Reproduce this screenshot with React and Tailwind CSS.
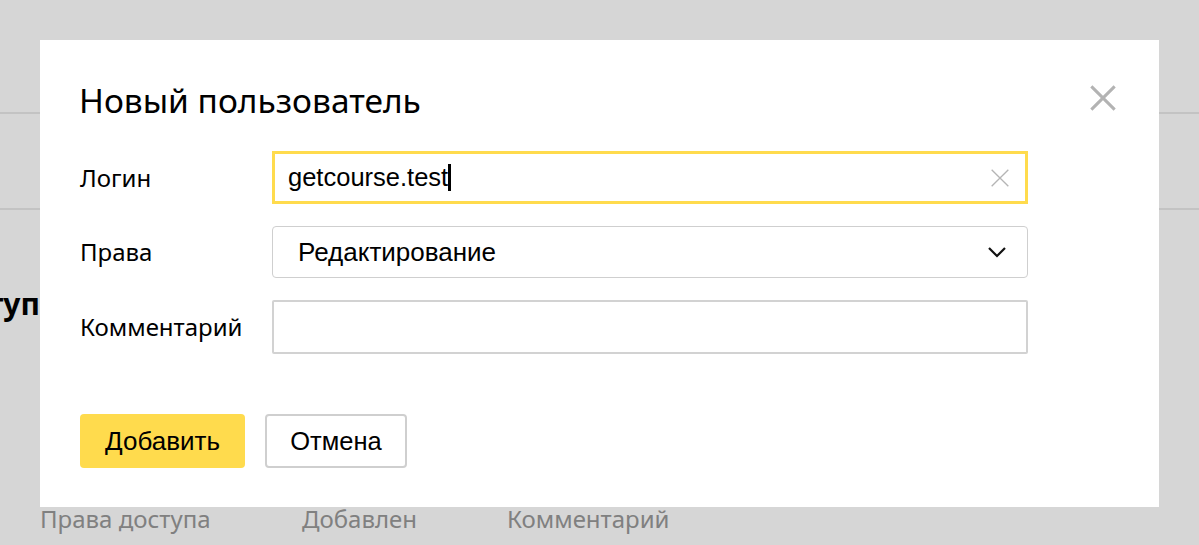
const Cross = ({ size, stroke, color }) => (
  <svg width={size} height={size} viewBox="0 0 24 24" fill="none">
    <path d="M2 2L22 22M22 2L2 22" stroke={color} strokeWidth={stroke} />
  </svg>
);

const Field = ({ label, children }) => (
  <div className="flex items-center">
    <div className="w-[192px] text-[24px] text-black" style={{ fontFamily: '"Noto Sans", sans-serif' }}>
      {label}
    </div>
    <div className="flex-1">{children}</div>
  </div>
);

export default function App() {
  return (
    <div className="relative w-full h-[545px] bg-[#d6d6d6] overflow-hidden" style={{ fontFamily: '"Noto Sans", sans-serif' }}>
      {/* page behind the modal */}
      <div className="flex flex-col">
        <div className="h-[112px]" />
        <div className="h-[2px] bg-[#c3c3c3]" />
        <div className="h-[94px]" />
        <div className="h-[2px] bg-[#c3c3c3]" />
        <div className="h-[76px]" />
        <div className="w-[40px] overflow-hidden flex justify-end">
          <span className="whitespace-nowrap text-[30px] font-bold text-black leading-[36px]">Права доступ</span>
        </div>
        <div className="h-[182px]" />
        <div className="flex pl-[40px] text-[24px] text-[#808080] leading-[30px]">
          <span className="w-[262px]">Права доступа</span>
          <span className="w-[205px]">Добавлен</span>
          <span>Комментарий</span>
        </div>
      </div>

      {/* modal */}
      <div className="absolute left-[40px] top-[40px] w-[1119px] h-[467px] bg-white px-[40px] pt-[40px]">
        <button className="absolute right-[42px] top-[44px]">
          <Cross size={28} stroke={2.6} color="#b3b3b3" />
        </button>
        <h1 className="text-[33.5px] leading-[40px] text-black -ml-[1px]">Новый пользователь</h1>

        <div className="mt-[31px] flex flex-col gap-[22px] pr-[91px]" style={{ fontFamily: '"Liberation Sans", Arial, sans-serif' }}>
          <Field label="Логин">
            <div className="h-[53px] border-[3px] border-[#ffdb4d] flex items-center pl-[13px] pr-[15px]">
              <span className="text-[25.5px] text-black">getcourse.test</span>
              <span className="w-[3px] h-[27px] bg-black" />
              <span className="flex-1" />
              <Cross size={20} stroke={1.6} color="#b5b5b5" />
            </div>
          </Field>
          <Field label="Права">
            <div className="h-[52px] border border-[#cfcfcf] rounded-[4px] flex items-center pl-[25px] pr-[20px]">
              <span className="text-[26px] text-black flex-1">Редактирование</span>
              <svg width="20" height="12" viewBox="0 0 20 12" fill="none">
                <path d="M2 2L10 10L18 2" stroke="#111" strokeWidth="2.2" />
              </svg>
            </div>
          </Field>
          <Field label="Комментарий">
            <div className="h-[54px] border-2 border-[#d2d2d2] rounded-[2px]" />
          </Field>
        </div>

        <div className="mt-[60px] flex gap-[20px]" style={{ fontFamily: '"Liberation Sans", Arial, sans-serif' }}>
          <button className="w-[165px] h-[54px] bg-[#ffdb4d] rounded-[4px] text-[26px] text-black">Добавить</button>
          <button className="w-[142px] h-[54px] bg-white border-2 border-[#cfcfcf] rounded-[4px] text-[25.5px] text-black">Отмена</button>
        </div>
      </div>
    </div>
  );
}
